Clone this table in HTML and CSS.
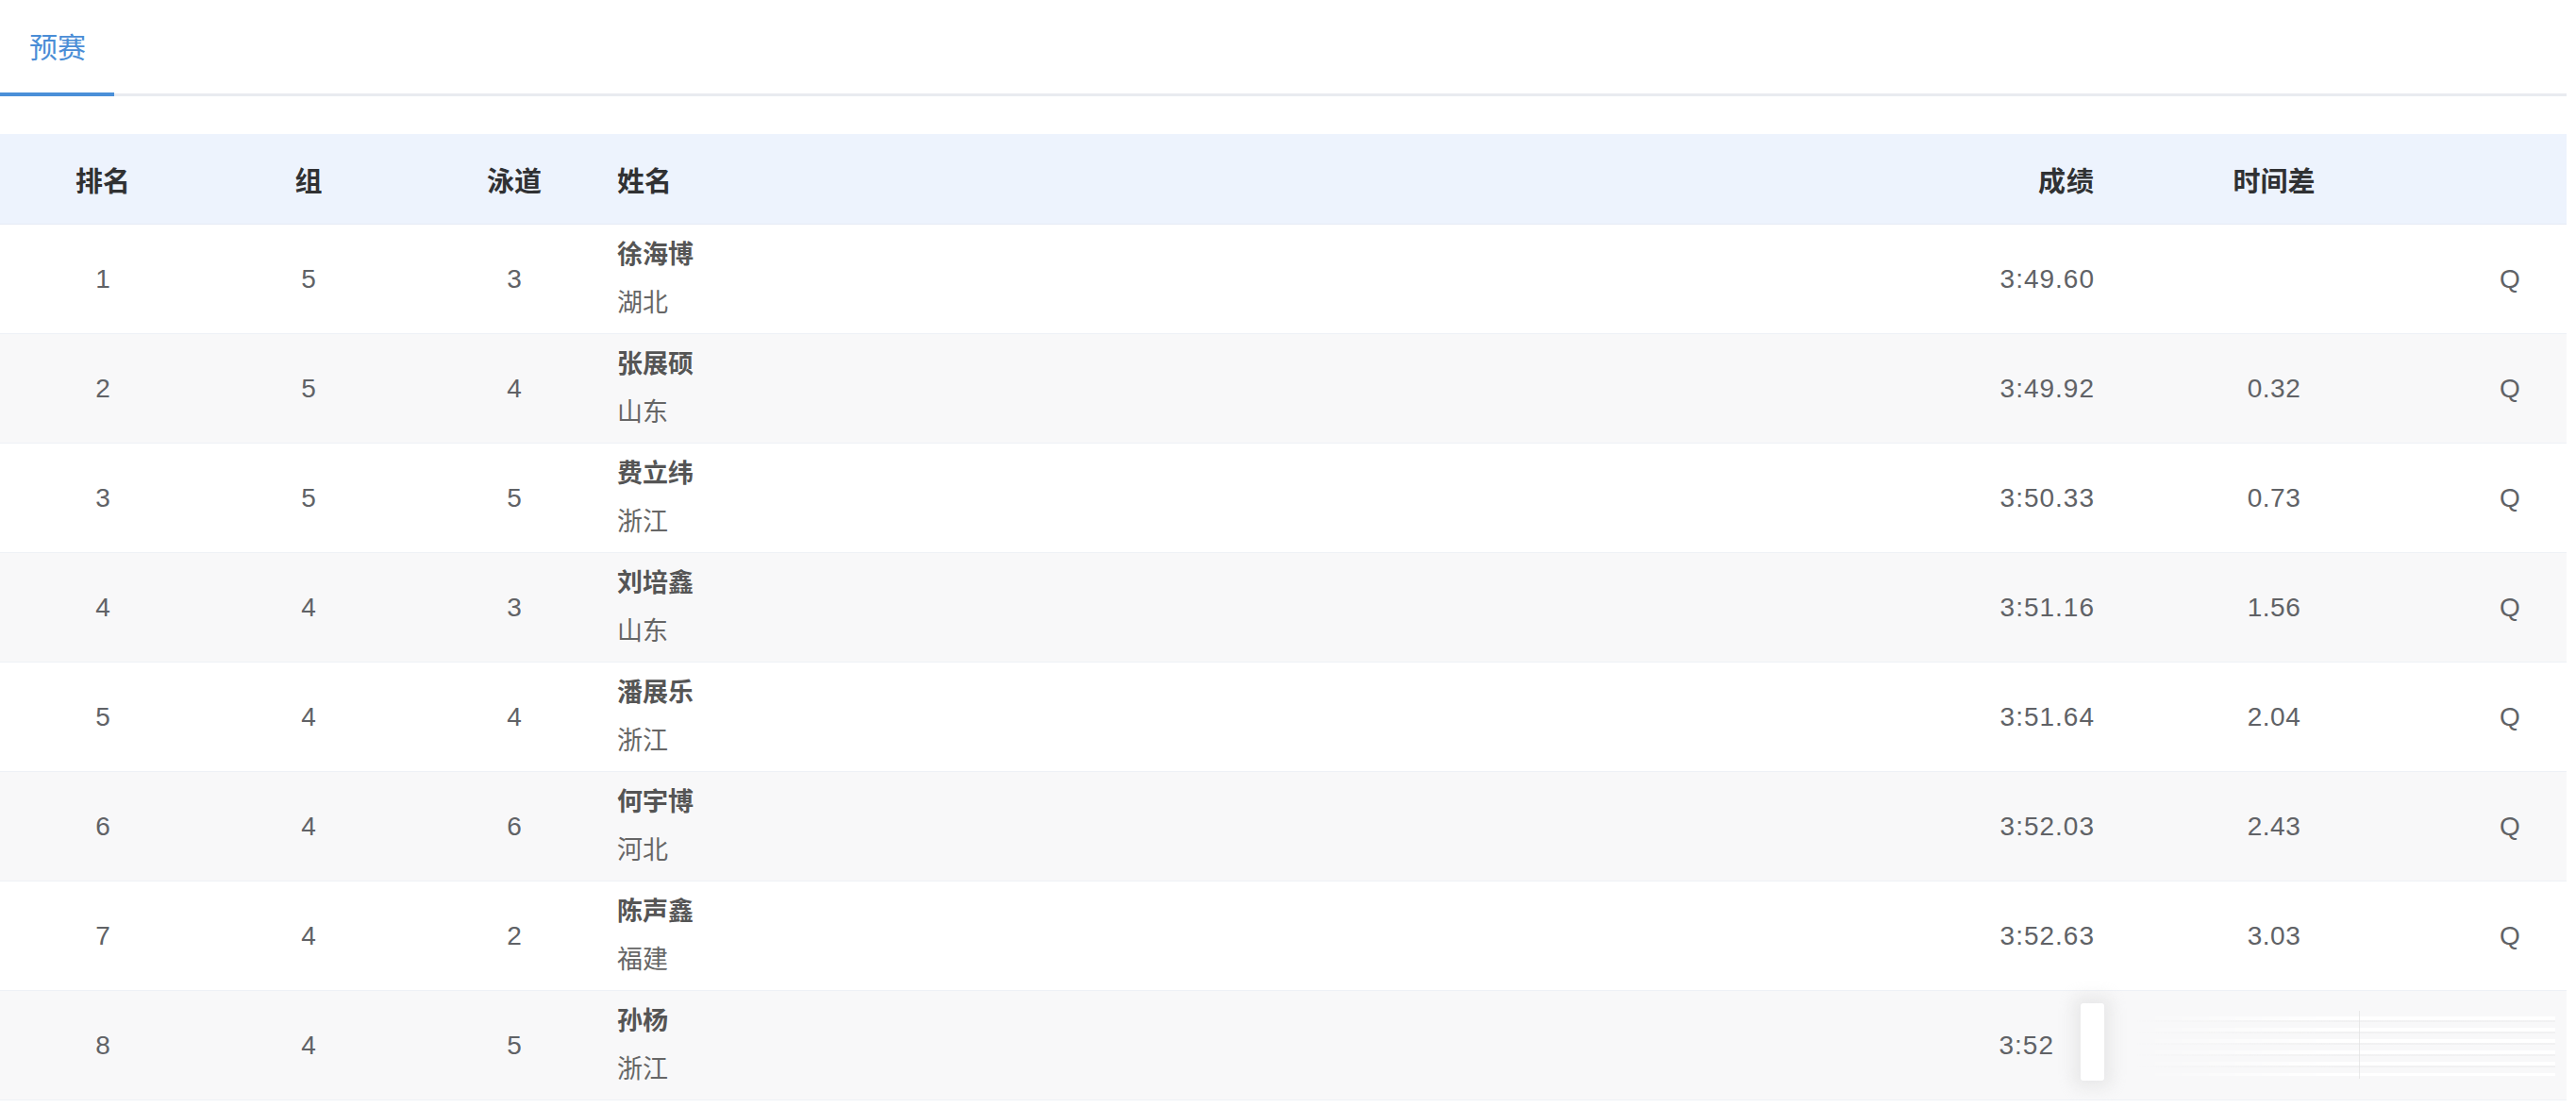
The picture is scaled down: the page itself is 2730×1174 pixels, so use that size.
FILE: index.html
```html
<!DOCTYPE html>
<html lang="zh">
<head>
  <meta charset="UTF-8">
  <title>预赛成绩</title>
  <link rel="stylesheet" href="styles.css">
</head>
<body>
  <div class="pagina">
    <div class="tabs">
      <div class="tab activo">预赛</div>
    </div>

    <div class="resultados">
      <table>
        <colgroup>
          <col class="c-num">
          <col class="c-num">
          <col class="c-num">
          <col>
          <col class="c-marca">
          <col class="c-dif">
          <col class="c-q">
        </colgroup>
        <thead>
          <tr>
            <th>排名</th>
            <th>组</th>
            <th>泳道</th>
            <th class="izq">姓名</th>
            <th class="der">成绩</th>
            <th>时间差</th>
            <th></th>
          </tr>
        </thead>
        <tbody>
          <tr>
            <td>1</td><td>5</td><td>3</td>
            <td class="izq"><div class="nombre">徐海博</div><div class="prov">湖北</div></td>
            <td class="der">3:49.60</td><td></td><td>Q</td>
          </tr>
          <tr>
            <td>2</td><td>5</td><td>4</td>
            <td class="izq"><div class="nombre">张展硕</div><div class="prov">山东</div></td>
            <td class="der">3:49.92</td><td class="dif">0.32</td><td>Q</td>
          </tr>
          <tr>
            <td>3</td><td>5</td><td>5</td>
            <td class="izq"><div class="nombre">费立纬</div><div class="prov">浙江</div></td>
            <td class="der">3:50.33</td><td class="dif">0.73</td><td>Q</td>
          </tr>
          <tr>
            <td>4</td><td>4</td><td>3</td>
            <td class="izq"><div class="nombre">刘培鑫</div><div class="prov">山东</div></td>
            <td class="der">3:51.16</td><td class="dif">1.56</td><td>Q</td>
          </tr>
          <tr>
            <td>5</td><td>4</td><td>4</td>
            <td class="izq"><div class="nombre">潘展乐</div><div class="prov">浙江</div></td>
            <td class="der">3:51.64</td><td class="dif">2.04</td><td>Q</td>
          </tr>
          <tr>
            <td>6</td><td>4</td><td>6</td>
            <td class="izq"><div class="nombre">何宇博</div><div class="prov">河北</div></td>
            <td class="der">3:52.03</td><td class="dif">2.43</td><td>Q</td>
          </tr>
          <tr>
            <td>7</td><td>4</td><td>2</td>
            <td class="izq"><div class="nombre">陈声鑫</div><div class="prov">福建</div></td>
            <td class="der">3:52.63</td><td class="dif">3.03</td><td>Q</td>
          </tr>
          <tr>
            <td>8</td><td>4</td><td>5</td>
            <td class="izq"><div class="nombre">孙杨</div><div class="prov">浙江</div></td>
            <td class="der"><span class="cortado">3:52</span></td><td></td><td></td>
          </tr>
        </tbody>
      </table>

      <!-- mancha borrosa encima de la última fila -->
      <div class="mancha">
        <div class="mancha-barra"></div>
        <div class="mancha-rayas"></div>
        <div class="mancha-linea"></div>
      </div>
    </div>
  </div>
</body>
</html>
```

FILE: styles.css
```css
body {
  margin: 0;
  background: #fff;
  font-family: "Liberation Sans", "Noto Sans CJK SC", sans-serif;
  color: #606266;
}
.pagina {
  width: 2720px;
}
.tabs {
  display: flex;
  height: 99px;
  border-bottom: 3px solid #e9ebf0;
}
.tab {
  position: relative;
  box-sizing: border-box;
  width: 121px;
  padding-left: 31px;
  line-height: 96px;
  font-size: 30px;
  font-family: "Noto Sans CJK SC", sans-serif;
}
.activo {
  color: #4a8dd6;
}
.activo::after {
  content: "";
  position: absolute;
  left: 0;
  right: 0;
  bottom: -3px;
  height: 4px;
  background: #4a8fd8;
}
.resultados {
  position: relative;
  margin-top: 40px;
}
table {
  width: 100%;
  border-collapse: collapse;
  table-layout: fixed;
}
.c-num {
  width: 218px;
}
.c-marca {
  width: 272px;
}
.c-dif {
  width: 380px;
}
.c-q {
  width: 120px;
}
th, td {
  padding: 0;
  text-align: center;
  vertical-align: middle;
}
th {
  height: 95px;
  background: #edf3fd;
  border-bottom: 1px solid #e6ebf5;
  font-size: 29px;
  font-weight: bold;
  color: #303133;
}
td {
  height: 115px;
  border-bottom: 1px solid #eef1f6;
  font-size: 28px;
}
tbody tr:nth-child(even) td {
  background: #f8f8f9;
}
.izq {
  text-align: left;
}
.der {
  text-align: right;
  letter-spacing: 1px;
}
.dif {
  letter-spacing: 0.5px;
}
.nombre, .prov {
  line-height: 51px;
  font-size: 27px;
  letter-spacing: 0;
}
.nombre {
  font-weight: 600;
  color: #555;
}
.prov {
  color: #666;
}
.cortado {
  padding-right: 43px;
}
.mancha {
  position: absolute;
  left: 2186px;
  top: 915px;
  width: 530px;
  height: 95px;
}
.mancha-barra {
  position: absolute;
  left: 19px;
  top: 6px;
  width: 25px;
  height: 82px;
  background: #fff;
  border-radius: 3px;
  box-shadow: 0 0 16px 8px rgba(215, 215, 215, 0.45);
}
.mancha-rayas {
  position: absolute;
  left: 70px;
  top: 20px;
  width: 452px;
  height: 63px;
  background: repeating-linear-gradient(180deg, rgba(255, 255, 255, 1) 0 4px, rgba(230, 230, 230, 0.35) 4px 6px, transparent 6px 12px);
  -webkit-mask-image: linear-gradient(90deg, transparent, #000 50%);
  mask-image: linear-gradient(90deg, transparent, #000 50%);
}
.mancha-linea {
  position: absolute;
  left: 314px;
  top: 14px;
  width: 1px;
  height: 72px;
  background: rgba(225, 225, 225, 0.7);
}
```
